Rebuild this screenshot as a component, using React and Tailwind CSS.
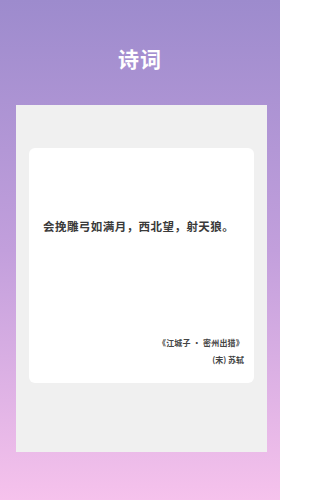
export default function App() {
  return (
    <div
      className="w-[280px] h-[500px] flex flex-col bg-gradient-to-b from-[#9d8bcd] via-[#c29fdc] to-[#f6c2ec]"
      style={{ fontFamily: '"Noto Sans CJK SC", "Noto Sans", sans-serif' }}
    >
      {/* Header */}
      <div className="h-[105px] flex items-center justify-center pt-[12px]">
        <h1 className="text-[21px] font-bold text-white tracking-[1px]">诗词</h1>
      </div>

      {/* Gray panel */}
      <div className="ml-[16px] w-[251px] h-[347px] bg-[#f0f0f0] px-[13px] pt-[43px]">
        <div className="bg-white rounded-[6px] h-[235px] flex flex-col pl-[14px] pr-[10px]">
          <p className="mt-[71px] text-[11.5px] leading-[14px] font-bold text-[#3a3a3a] tracking-[0.45px] whitespace-nowrap">
            会挽雕弓如满月，西北望，射天狼。
          </p>
          <div className="mt-auto mb-[17px] flex flex-col items-end gap-[5px] text-[8px] leading-[12px] font-bold text-[#444]">
            <span className="tracking-[0.2px]">《江城子 · 密州出猎》</span>
            <span>(宋) 苏轼</span>
          </div>
        </div>
      </div>
    </div>
  );
}
